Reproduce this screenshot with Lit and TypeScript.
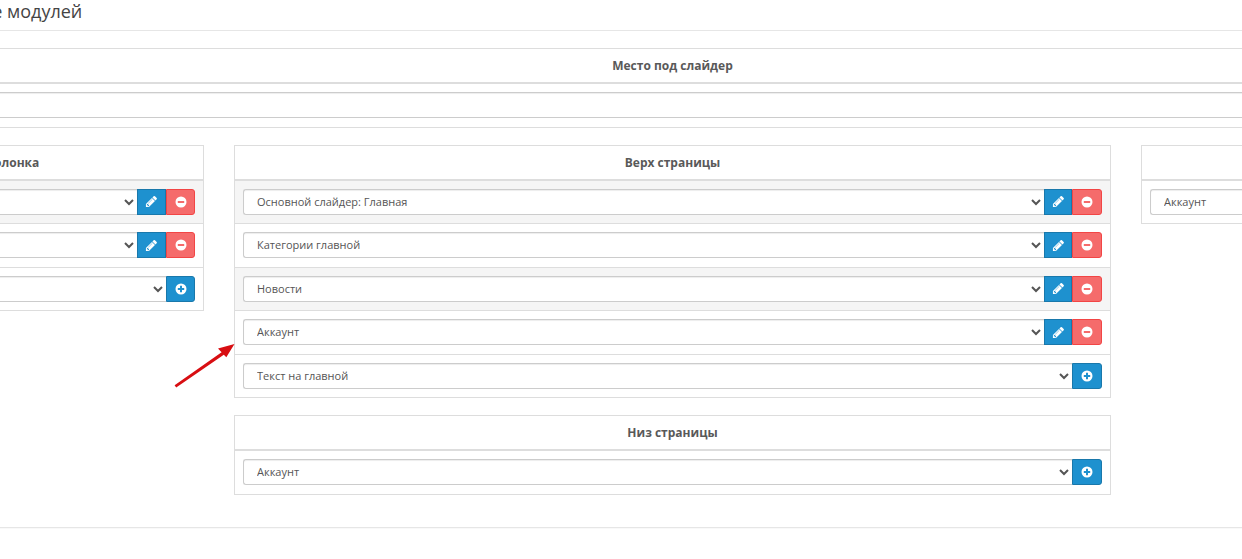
import { LitElement, css, html, nothing } from 'lit'
import { customElement } from 'lit/decorators.js'

interface Row {
  label: string
  saved: boolean
}

const pencil = html`<svg class="ico pen" viewBox="0 0 1792 1792"><path fill="#fff" d="M491 1536l91-91-235-235-91 91v107h128v128h107zm523-928q0-22-22-22-10 0-17 7l-542 542q-7 7-7 17 0 22 22 22 10 0 17-7l542-542q7-7 7-17zm-54-192l416 416-832 832h-416v-416zm683 96q0 53-37 90l-166 166-416-416 166-165q36-38 90-38 53 0 91 38l235 234q37 39 37 91z"/></svg>`
const minus = html`<svg class="ico" viewBox="0 0 12 12"><path fill="#fff" fill-rule="evenodd" d="M6 .5a5.5 5.5 0 1 1 0 11a5.5 5.5 0 0 1 0-11zM2.8 5v2h6.4V5z"/></svg>`
const plus = html`<svg class="ico" viewBox="0 0 12 12"><path fill="#fff" fill-rule="evenodd" d="M6 .5a5.5 5.5 0 1 1 0 11a5.5 5.5 0 0 1 0-11zM5 2.8V5H2.8v2H5v2.2h2V7h2.2V5H7V2.8z"/></svg>`

@customElement('module-panel')
class ModulePanel extends LitElement {
  static properties = {
    heading: { type: String },
    rows: { attribute: false },
  }

  heading = ''
  rows: Row[] = []

  render() {
    return html`
      <div class="panel">
        <div class="head">${this.heading}</div>
        ${this.rows.map(
          (row, i) => html`
            <div class="row ${row.saved && i % 2 === 0 ? 'striped' : ''}">
              <select>
                <option>${row.label}</option>
              </select>
              ${row.saved
                ? html`<button class="btn blue edit">${pencil}</button><button class="btn red last">${minus}</button>`
                : nothing}
              ${!row.saved ? html`<button class="btn blue last">${plus}</button>` : nothing}
            </div>
          `
        )}
      </div>
    `
  }

  static styles = css`
    :host {
      display: block;
    }
    .panel {
      border: 1px solid #ddd;
      border-bottom: 0;
    }
    .head {
      height: 33px;
      line-height: 33px;
      border-bottom: 2px solid #ddd;
      text-align: center;
      font-size: 12px;
      font-weight: 700;
      color: #595959;
    }
    .row {
      display: flex;
      box-sizing: border-box;
      height: 43.4px;
      padding: 8px 8px 0;
      border-bottom: 1px solid #ddd;
    }
    .striped {
      background: #f5f5f5;
    }
    select {
      flex: 1;
      min-width: 0;
      height: 26px;
      box-sizing: border-box;
      padding: 0 9px 1px;
      background-color: #fff;
      border: 1px solid #ccc;
      border-right: 0;
      border-radius: 3px 0 0 3px;
      box-shadow: inset 0 1px 1px rgba(0, 0, 0, 0.075);
      font: 11px 'Open Sans', sans-serif;
      color: #555;
    }
    .btn {
      display: flex;
      align-items: center;
      justify-content: center;
      box-sizing: border-box;
      height: 26px;
      padding: 0;
      border: 1px solid;
    }
    .edit {
      width: 28.8px;
    }
    .blue {
      background: #1e91cf;
      border-color: #1978ab;
    }
    .red {
      background: #f56b6b;
      border-color: #f24545;
    }
    .last {
      width: 29.6px;
      border-radius: 0 3px 3px 0;
    }
    .ico {
      width: 12px;
      height: 12px;
      display: block;
    }
    .pen {
      width: 13px;
      height: 13px;
    }
  `
}

@customElement('app-root')
class AppRoot extends LitElement {
  render() {
    return html`
      <div class="page">
        <h1>Расположение модулей</h1>
        <module-panel
          heading="Место под слайдер"
          .rows=${[{ label: '', saved: false }]}
        ></module-panel>
        <div class="columns">
          <module-panel
            class="left"
            heading="Левая колонка"
            .rows=${[
              { label: 'Аккаунт', saved: true },
              { label: 'Новости', saved: true },
              { label: 'Аккаунт', saved: false },
            ]}
          ></module-panel>
          <div class="stack">
            <module-panel
              heading="Верх страницы"
              .rows=${[
                { label: 'Основной слайдер: Главная', saved: true },
                { label: 'Категории главной', saved: true },
                { label: 'Новости', saved: true },
                { label: 'Аккаунт', saved: true },
                { label: 'Текст на главной', saved: false },
              ]}
            ></module-panel>
            <module-panel
              heading="Низ страницы"
              .rows=${[{ label: 'Аккаунт', saved: false }]}
            ></module-panel>
          </div>
          <module-panel
            heading="Правая колонка"
            .rows=${[{ label: 'Аккаунт', saved: false }]}
          ></module-panel>
        </div>
        <div class="rule"></div>
      </div>
      <svg class="arrow" width="70" height="52" viewBox="170 340 70 52">
        <path fill="#d80e12" d="M234.5 344L218 348.6L221.6 352.2L174.6 385.2L176.2 387.6L223.8 354.8L226.3 357.3Z" />
      </svg>
    `
  }

  static styles = css`
    :host {
      display: block;
      position: relative;
      width: 1242px;
      height: 559px;
      overflow: hidden;
      background: #fff;
      font-family: 'Open Sans', sans-serif;
    }
    .page {
      width: 1784px;
      margin-left: -219.5px;
    }
    h1 {
      margin: 0 0 17.4px;
      height: 30px;
      box-sizing: content-box;
      padding-left: 93px;
      border-bottom: 1px solid #e6e6e6;
      font-size: 18px;
      font-weight: 400;
      line-height: 22px;
      color: #444;
    }
    .columns {
      display: grid;
      grid-template-columns: 423.5px 877px 423.5px;
      gap: 30px;
      margin-top: 17.2px;
      align-items: start;
    }
    .left {
      margin-right: -0.4px;
    }
    .stack {
      display: flex;
      flex-direction: column;
      gap: 17.4px;
    }
    .rule {
      margin: 32px -15px 0;
      border-top: 1px solid #e6e6e6;
      box-shadow: 0 1px 1px rgba(0, 0, 0, 0.03);
    }
    .arrow {
      position: absolute;
      left: 170px;
      top: 340px;
    }
  `
}
